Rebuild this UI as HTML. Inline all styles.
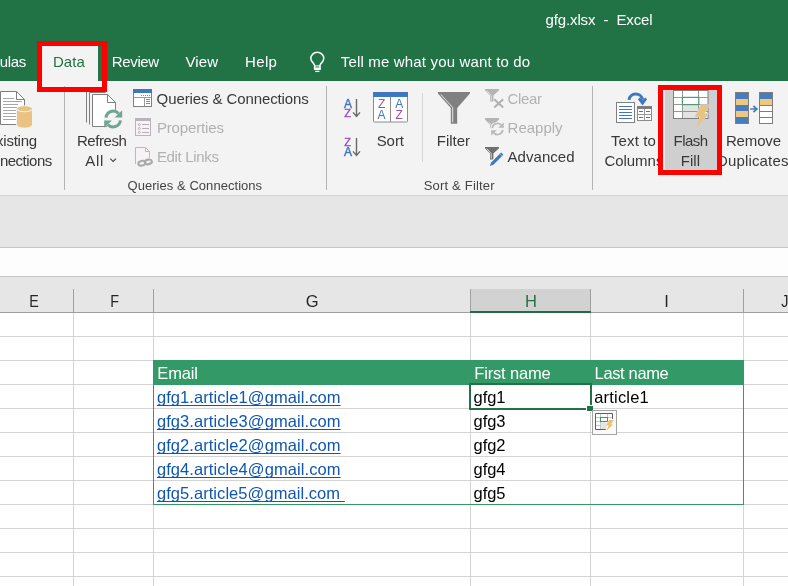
<!DOCTYPE html>
<html lang="en">
<head>
<meta charset="utf-8">
<title>gfg.xlsx - Excel</title>
<style>
html,body{margin:0;padding:0}
body{width:788px;height:586px;overflow:hidden;position:relative;background:#fff;font-family:'Liberation Sans',sans-serif}
.a{position:absolute}
#icons{position:absolute;left:0;top:0;z-index:5}
#txt{position:absolute;left:0;top:0;width:788px;height:586px;z-index:6;will-change:transform}
#txt span{z-index:6}
#icons{will-change:transform}
.red{position:absolute;border:5px solid #fe0000;box-sizing:border-box;z-index:8}
</style>
</head>
<body>
<!-- title bar + tab row -->
<div class="a" style="left:0;top:0;width:788px;height:81px;background:#217346"></div>
<!-- selected tab -->
<div class="a" style="left:40px;top:44px;width:58px;height:38px;background:#f3f3f3"></div>
<!-- ribbon -->
<div class="a" style="left:0;top:81px;width:788px;height:114px;background:#f3f3f3"></div>
<div class="a" style="left:0;top:195px;width:788px;height:1px;background:#d4d4d4"></div>
<div class="a" style="left:0;top:196px;width:788px;height:51px;background:#e6e6e6"></div>
<div class="a" style="left:0;top:247px;width:788px;height:1px;background:#c6c6c6"></div>
<div class="a" style="left:0;top:248px;width:788px;height:28px;background:#fdfdfd"></div>
<div class="a" style="left:0;top:276px;width:788px;height:1px;background:#c6c6c6"></div>
<div class="a" style="left:0;top:277px;width:788px;height:35px;background:#e6e6e6"></div>
<!-- selected column header -->
<div class="a" style="left:471px;top:289px;width:120px;height:22px;background:#d2d2d2"></div>
<div class="a" style="left:470px;top:311px;width:121px;height:2px;background:#1f6e43;z-index:3"></div>
<!-- header bottom line -->
<div class="a" style="left:0;top:312px;width:788px;height:1px;background:#9e9e9e"></div>

<!-- flash fill highlight -->
<div class="a" style="left:665px;top:86px;width:55px;height:88px;background:#cfcfcf;z-index:1"></div>

<svg id="grid" class="a" style="left:0;top:0;z-index:2" width="788" height="586" viewBox="0 0 788 586" shape-rendering="crispEdges">
  <!-- ribbon separators -->
  <g stroke="#b4b4b4" stroke-width="1">
    <line x1="64.5" y1="86" x2="64.5" y2="190"/>
    <line x1="326.5" y1="86" x2="326.5" y2="190"/>
    <line x1="592.5" y1="86" x2="592.5" y2="190"/>
  </g>
  <line x1="422.5" y1="93" x2="422.5" y2="162" stroke="#d6d6d6"/>
  <!-- header dividers -->
  <g stroke="#a0a0a0" stroke-width="1">
    <line x1="73.5" y1="289" x2="73.5" y2="312"/>
    <line x1="153.5" y1="289" x2="153.5" y2="312"/>
    <line x1="470.5" y1="289" x2="470.5" y2="312"/>
    <line x1="590.5" y1="289" x2="590.5" y2="312"/>
    <line x1="743.5" y1="289" x2="743.5" y2="312"/>
  </g>
  <!-- gridlines -->
  <g stroke="#d4d4d4" stroke-width="1">
    <line x1="73.5" y1="313" x2="73.5" y2="586"/>
    <line x1="153.5" y1="313" x2="153.5" y2="586"/>
    <line x1="470.5" y1="313" x2="470.5" y2="586"/>
    <line x1="590.5" y1="313" x2="590.5" y2="586"/>
    <line x1="743.5" y1="313" x2="743.5" y2="586"/>
    <line x1="0" y1="336.5" x2="788" y2="336.5"/>
    <line x1="0" y1="360.5" x2="788" y2="360.5"/>
    <line x1="0" y1="384.5" x2="788" y2="384.5"/>
    <line x1="0" y1="408.5" x2="788" y2="408.5"/>
    <line x1="0" y1="432.5" x2="788" y2="432.5"/>
    <line x1="0" y1="456.5" x2="788" y2="456.5"/>
    <line x1="0" y1="480.5" x2="788" y2="480.5"/>
    <line x1="0" y1="504.5" x2="788" y2="504.5"/>
    <line x1="0" y1="528.5" x2="788" y2="528.5"/>
    <line x1="0" y1="552.5" x2="788" y2="552.5"/>
    <line x1="0" y1="576.5" x2="788" y2="576.5"/>
  </g>
  <!-- table -->
  <rect x="153" y="360" width="591" height="25" fill="#339966"/>
  <rect x="153.5" y="360.5" width="590" height="144" fill="none" stroke="#339966"/>
  <!-- selected cell -->
  <rect x="470" y="384" width="121" height="25" fill="none" stroke="#217346" stroke-width="2"/>
  <rect x="586" y="405" width="7" height="7" fill="#ffffff"/>
  <rect x="587" y="406" width="6" height="5" fill="#217346"/>
  <!-- flash fill options button -->
  <rect x="592.5" y="410.5" width="24" height="24" fill="#fafafa" stroke="#a3a3a3"/>
</svg>

<svg id="icons" width="788" height="586" viewBox="0 0 788 586">
<!-- lightbulb -->
<g fill="none" stroke="#ffffff" stroke-width="1.5" stroke-linejoin="round">
  <path d="M314.6,69.2 V65.4 C314.6,63.2 310.8,62.2 310.8,58.6 A6.5,6.3 0 0 1 323.8,58.6 C323.8,62.2 320,63.2 320,65.4 V69.2 Z"/>
  <line x1="314.6" y1="65.9" x2="320" y2="65.9" stroke-width="1.1"/>
</g>
<rect x="314" y="67.4" width="6.6" height="2.4" fill="#ffffff" fill-opacity="0.92"/>
<line x1="315.3" y1="71.4" x2="319.4" y2="71.4" stroke="#ffffff" stroke-width="1.3"/>

<!-- Existing Connections -->
<g>
  <path d="M0.5,91.5 H16.5 L24.5,99.5 V124.5 H0.5 Z" fill="#ffffff" stroke="#7f7f7f"/>
  <path d="M16.5,91.5 V99.5 H24.5" fill="none" stroke="#7f7f7f"/>
  <g stroke="#a6a6a6" stroke-width="1" shape-rendering="crispEdges">
    <line x1="3" y1="98.5" x2="14" y2="98.5"/>
    <line x1="3" y1="101.5" x2="22" y2="101.5"/>
    <line x1="3" y1="104.5" x2="18" y2="104.5"/>
    <line x1="3" y1="107.5" x2="17" y2="107.5"/>
    <line x1="3" y1="110.5" x2="17" y2="110.5"/>
    <line x1="3" y1="113.5" x2="17" y2="113.5"/>
    <line x1="3" y1="116.5" x2="17" y2="116.5"/>
    <line x1="3" y1="119.5" x2="17" y2="119.5"/>
  </g>
  <path d="M16.5,109 A8,3.3 0 0 1 32.5,109 V124.8 A8,3.3 0 0 1 16.5,124.8 Z" fill="#eac282" stroke="#f3f3f3" stroke-width="1"/>
  <path d="M17.3,109.6 A7.3,2.6 0 0 0 31.7,109.6" fill="none" stroke="#fbf4e6" stroke-width="1.1"/>
</g>

<!-- Refresh All -->
<g>
  <g fill="none" stroke="#7f7f7f" stroke-width="1">
    <line x1="86.5" y1="90" x2="86.5" y2="122.5"/>
    <path d="M105.5,92.5 H89.5 V124.5"/>
  </g>
  <path d="M92.5,94.5 H107.5 L115.5,102.5 V126.5 H92.5 Z" fill="#ffffff" stroke="#7f7f7f"/>
  <path d="M107.5,94.5 V102.5 H115.5" fill="none" stroke="#7f7f7f"/>
  <circle cx="113.2" cy="119" r="9.8" fill="#f3f3f3"/>
  <rect x="103.5" y="109.5" width="8" height="5" fill="#ffffff"/>
  <g fill="none" stroke="#6fa592" stroke-width="3">
    <path d="M106.0,117.6 A7.2,7.2 0 0 1 118.6,113.6"/>
    <path d="M120.4,120.4 A7.2,7.2 0 0 1 107.8,124.4"/>
  </g>
  <path d="M122.2,110.2 V117.6 H114.6 Z" fill="#6fa592"/>
  <path d="M104.2,127.8 V120.4 H111.8 Z" fill="#6fa592"/>
</g>

<!-- Queries & Connections icon -->
<g shape-rendering="crispEdges">
  <rect x="133.5" y="89.5" width="18" height="17" fill="#ffffff" stroke="#7f7f7f"/>
  <rect x="133" y="89" width="19" height="4" fill="#3e78c0"/>
  <line x1="134" y1="97.5" x2="151" y2="97.5" stroke="#9a9a9a"/>
  <line x1="144.5" y1="97" x2="144.5" y2="106" stroke="#9a9a9a"/>
  <g stroke="#8a8a8a">
    <line x1="146" y1="99.5" x2="150" y2="99.5"/>
    <line x1="146" y1="101.5" x2="150" y2="101.5"/>
    <line x1="146" y1="103.5" x2="150" y2="103.5"/>
  </g>
  <g fill="#8a8a8a">
    <rect x="141" y="95" width="1" height="1"/><rect x="143" y="95" width="1" height="1"/><rect x="145" y="95" width="1" height="1"/><rect x="147" y="95" width="1" height="1"/><rect x="149" y="95" width="1" height="1"/>
  </g>
</g>

<!-- Properties icon (disabled) -->
<g>
  <rect x="135.5" y="118.5" width="15" height="17" fill="#f6f2f6" stroke="#b9b4b9" shape-rendering="crispEdges"/>
  <rect x="135" y="118" width="16" height="3" fill="#b9b4b9" shape-rendering="crispEdges"/>
  <g fill="none" stroke="#b4afb4" stroke-width="0.9">
    <circle cx="139.3" cy="124.6" r="1"/>
    <circle cx="139.3" cy="128.5" r="1"/>
    <circle cx="139.3" cy="132.4" r="1"/>
  </g>
  <g stroke="#b4afb4" shape-rendering="crispEdges">
    <line x1="142" y1="124.5" x2="149" y2="124.5"/>
    <line x1="142" y1="128.5" x2="149" y2="128.5"/>
    <line x1="142" y1="132.5" x2="149" y2="132.5"/>
  </g>
</g>

<!-- Edit Links icon (disabled) -->
<g>
  <path d="M135.5,164 V147.5 H145.5 L149.5,151.5 V158.5" fill="#f6f2f6" stroke="#bcb8bc"/>
  <path d="M145.5,147.5 V151.5 H149.5" fill="none" stroke="#bcb8bc"/>
  <g fill="none" stroke="#f3f3f3" stroke-width="3.6">
    <ellipse cx="141.9" cy="163.2" rx="3.6" ry="2.3" transform="rotate(-12 141.9 163.2)"/>
    <ellipse cx="148.3" cy="161.9" rx="3.6" ry="2.3" transform="rotate(-12 148.3 161.9)"/>
  </g>
  <g fill="none" stroke="#aaaaaa" stroke-width="2.1">
    <ellipse cx="141.9" cy="163.2" rx="3.6" ry="2.3" transform="rotate(-12 141.9 163.2)"/>
    <ellipse cx="148.3" cy="161.9" rx="3.6" ry="2.3" transform="rotate(-12 148.3 161.9)"/>
  </g>
</g>

<!-- Sort A-Z / Z-A -->
<g font-family="'Liberation Sans',sans-serif" text-anchor="middle" stroke-width="0.4">
  <text x="348" y="107.8" font-size="12" fill="#3e78c0" stroke="#3e78c0">A</text>
  <text x="347.5" y="117" font-size="11" fill="#9b4fb5" stroke="#9b4fb5">Z</text>
  <text x="347.5" y="145.6" font-size="11" fill="#9b4fb5" stroke="#9b4fb5">Z</text>
  <text x="348" y="155.8" font-size="12" fill="#3e78c0" stroke="#3e78c0">A</text>
</g>
<g fill="none" stroke="#6a6a6a" stroke-width="1.4">
  <path d="M356.5,99 V116.4 M353,112.4 L356.5,116.4 L360,112.4"/>
  <path d="M356.5,138 V155.4 M353,151.4 L356.5,155.4 L360,151.4"/>
</g>

<!-- Sort big icon -->
<g>
  <rect x="373.5" y="92.5" width="34" height="29.5" rx="1" fill="#ffffff" stroke="#8c8c8c"/>
  <rect x="373" y="92" width="35" height="4.6" fill="#3e78c0" shape-rendering="crispEdges"/>
  <line x1="390.5" y1="96.6" x2="390.5" y2="122" stroke="#8c8c8c" shape-rendering="crispEdges"/>
  <g font-family="'Liberation Sans',sans-serif" font-size="12" text-anchor="middle">
    <text x="381.6" y="107.7" fill="#9b4fb5">Z</text>
    <text x="381.6" y="118.5" fill="#3e78c0">A</text>
    <text x="399.2" y="107.7" fill="#3e78c0">A</text>
    <text x="399.2" y="118.5" fill="#9b4fb5">Z</text>
  </g>
</g>

<!-- Filter funnel -->
<g>
  <path d="M437.9,92.1 H469.9 V93.6 L457.2,107.9 V123.8 H450.8 V107.9 L437.9,93.6 Z" fill="#808080"/>
  <path d="M440.8,94.4 L452.7,107.5 V122.4" fill="none" stroke="#f0f0f0" stroke-width="0.9"/>
</g>

<!-- Clear (disabled) -->
<g>
  <path d="M485,89.0 H499 V90.2 L493.4,95.6 V101.6 H490 V95.6 L485,90.2 Z" fill="#b4b4b4"/>
  <path d="M486.9,90.7 L491.2,95.6 V100.7" fill="none" stroke="#f0f0f0" stroke-width="0.8"/>
  <path d="M494.2,99.2 L503.2,107.6 M503.2,99.2 L494.2,107.6" stroke="#b0b0b0" stroke-width="2" fill="none"/>
</g>
<!-- Reapply (disabled) -->
<g>
  <path d="M485,118.1 H499 V119.3 L493.4,124.7 V128.1 H490 V124.7 L485,119.3 Z" fill="#b4b4b4"/>
  <path d="M486.9,119.8 L491.2,124.7 V127.2" fill="none" stroke="#f0f0f0" stroke-width="0.8"/>
  <circle cx="497.5" cy="128.9" r="7.3" fill="#f3f3f3"/>
  <path d="M485,118.1 H499 V119.3 L495.6,122.6 H488 L485,119.3 Z" fill="#b4b4b4"/>
  <g fill="none" stroke="#bcb8bc" stroke-width="1.8">
    <path d="M492.2,128.2 A5.3,5.3 0 0 1 501.2,125"/>
    <path d="M502.8,129.8 A5.3,5.3 0 0 1 493.8,133"/>
  </g>
  <path d="M503.8,122.4 V127.8 H498.2 Z" fill="#bcb8bc"/>
  <path d="M491.2,135.6 V130.2 H496.8 Z" fill="#bcb8bc"/>
</g>
<!-- Advanced -->
<g>
  <path d="M485,147.0 H499 V148.2 L493.4,153.6 V159.6 H490 V153.6 L485,148.2 Z" fill="#707070"/>
  <path d="M486.9,148.7 L491.2,153.6 V158.7" fill="none" stroke="#f3f3f3" stroke-width="0.8"/>
  <path d="M501.1,152.5 L503.4,154.8 L493.4,164.7 L489.8,166 L491.1,162.4 Z" fill="#3e78c0" stroke="#f3f3f3" stroke-width="1.6" paint-order="stroke"/>
  <path d="M499.7,153.9 L502,156.2" stroke="#c9daf0" stroke-width="0.6" fill="none"/>
</g>

<!-- Text to Columns -->
<g>
  <rect x="616.5" y="102.5" width="18" height="20" fill="#ffffff" stroke="#7f7f7f" shape-rendering="crispEdges"/>
  <g stroke="#3e78c0" stroke-width="1" shape-rendering="crispEdges">
    <line x1="619" y1="106.5" x2="632" y2="106.5"/>
    <line x1="619" y1="109.5" x2="632" y2="109.5"/>
    <line x1="619" y1="112.5" x2="632" y2="112.5"/>
    <line x1="619" y1="115.5" x2="632" y2="115.5"/>
    <line x1="619" y1="118.5" x2="632" y2="118.5"/>
  </g>
  <rect x="637.5" y="106.5" width="14" height="14" fill="#ffffff" stroke="#8c8c8c" shape-rendering="crispEdges"/>
  <rect x="637" y="106" width="15" height="3" fill="#7d7d7d" shape-rendering="crispEdges"/>
  <g stroke="#9a9a9a" shape-rendering="crispEdges">
    <line x1="644.5" y1="109" x2="644.5" y2="120"/>
    <line x1="638" y1="114.5" x2="651" y2="114.5"/>
  </g>
  <g stroke="#3e78c0" stroke-width="1" shape-rendering="crispEdges">
    <line x1="639" y1="111.5" x2="643" y2="111.5"/>
    <line x1="646" y1="111.5" x2="650" y2="111.5"/>
    <line x1="639" y1="117.5" x2="643" y2="117.5"/>
    <line x1="646" y1="117.5" x2="650" y2="117.5"/>
  </g>
  <path d="M629,99.9 A6.8,6.6 0 0 1 642.5,99.8" fill="none" stroke="#3e78c0" stroke-width="3"/>
  <path d="M637.9,99.2 L639.8,97.4 L642.5,100.2 L645.2,97.4 L647.1,99.2 L642.5,105.4 Z" fill="#3e78c0"/>
</g>

<!-- Flash Fill icon -->
<g>
  <rect x="673.5" y="90.5" width="34.5" height="28" fill="#ffffff" stroke="#7f7f7f"/>
  <rect x="683" y="105" width="15.5" height="13" fill="#e3e3e3"/>
  <g stroke="#979797" shape-rendering="crispEdges">
    <line x1="682.5" y1="91" x2="682.5" y2="118"/>
    <line x1="698.5" y1="91" x2="698.5" y2="118"/>
    <line x1="674" y1="97.5" x2="708" y2="97.5"/>
    <line x1="674" y1="104.5" x2="708" y2="104.5"/>
    <line x1="674" y1="111.5" x2="708" y2="111.5"/>
  </g>
  <rect x="682.4" y="97.4" width="16.4" height="7.2" fill="#ffffff" stroke="#4d9b7a" stroke-width="1.2"/>
  <path d="M701,104.9 H709.7 L703.6,113.9 H708.1 L696,128.1 L700.4,116.7 H695.5 Z" fill="#eac282" stroke="#cfcfcf" stroke-width="1.3" paint-order="stroke"/>
</g>

<!-- Remove Duplicates -->
<g shape-rendering="crispEdges">
  <rect x="735" y="92" width="14" height="32" fill="#477dbd"/>
  <rect x="735" y="99" width="14" height="6" fill="#efc880"/>
  <rect x="735" y="111" width="14" height="6" fill="#efc880"/>
  <rect x="735.5" y="92.5" width="13" height="31" fill="none" stroke="#7d7d7d"/>
  <rect x="759" y="92" width="14" height="32" fill="#ffffff"/>
  <rect x="759" y="92" width="14" height="7" fill="#477dbd"/>
  <rect x="759" y="99" width="14" height="6" fill="#efc880"/>
  <line x1="759" y1="105.5" x2="773" y2="105.5" stroke="#7d7d7d"/>
  <line x1="759" y1="111.5" x2="773" y2="111.5" stroke="#7d7d7d"/>
  <line x1="759" y1="117.5" x2="773" y2="117.5" stroke="#7d7d7d"/>
  <rect x="759.5" y="92.5" width="13" height="31" fill="none" stroke="#7d7d7d"/>
</g>
<path d="M750.2,109 H756.4 M753.4,105.8 L756.9,109 L753.4,112.2" fill="none" stroke="#477dbd" stroke-width="1.7"/>

<!-- Refresh All dropdown chevron -->
<path d="M110.3,158.6 L113.15,161.4 L116,158.6" fill="none" stroke="#444444" stroke-width="1.1"/>

<!-- Flash fill options icon -->
<g>
  <rect x="596" y="414" width="16.5" height="15.5" fill="#ffffff"/>
  <g stroke="#c9c9c9" shape-rendering="crispEdges">
    <line x1="600.5" y1="414" x2="600.5" y2="429"/>
    <line x1="607.5" y1="414" x2="607.5" y2="420"/>
    <line x1="596" y1="417.5" x2="612" y2="417.5"/>
    <line x1="596" y1="421.5" x2="601" y2="421.5"/>
    <line x1="596" y1="425.5" x2="606" y2="425.5"/>
  </g>
  <rect x="601" y="422.5" width="5.5" height="6.5" fill="#e4e4e4"/>
  <path d="M612.5,418.9 V413.5 H595.5 V429.5 H605.8" fill="none" stroke="#606060" stroke-width="1"/>
  <rect x="600.5" y="417.5" width="7" height="4" fill="#ffffff" stroke="#3f9775" stroke-width="1.1"/>
  <path d="M609,420.1 H613.8 L610.9,424.6 H613.2 L606.2,430.9 L608.6,425.5 H606 Z" fill="#edc373" stroke="#fafafa" stroke-width="0.8" paint-order="stroke"/>
</g>

</svg>

<div id="txt">
<span id="t0" style="position:absolute;left:545.50px;top:9.80px;font-size:15px;line-height:20px;color:#ffffff;letter-spacing:-0.122px;white-space:pre">gfg.xlsx  -  Excel</span>
<span id="t1" style="position:absolute;right:762.00px;top:51.80px;font-size:15px;line-height:20px;color:#ffffff;letter-spacing:-0.300px;white-space:nowrap">Formulas</span>
<span id="t2" style="position:absolute;left:52.90px;top:51.80px;font-size:15px;line-height:20px;color:#217346;letter-spacing:0.128px;white-space:nowrap">Data</span>
<span id="t3" style="position:absolute;left:111.80px;top:51.80px;font-size:15px;line-height:20px;color:#ffffff;letter-spacing:-0.365px;white-space:nowrap">Review</span>
<span id="t4" style="position:absolute;left:185.40px;top:51.80px;font-size:15px;line-height:20px;color:#ffffff;letter-spacing:0.187px;white-space:nowrap">View</span>
<span id="t5" style="position:absolute;left:245.10px;top:51.80px;font-size:15px;line-height:20px;color:#ffffff;letter-spacing:0.335px;white-space:nowrap">Help</span>
<span id="t6" style="position:absolute;left:340.80px;top:51.80px;font-size:15px;line-height:20px;color:#ffffff;letter-spacing:0.166px;white-space:nowrap">Tell me what you want to do</span>
<span id="t7" style="position:absolute;right:751.15px;top:130.80px;font-size:15px;line-height:20px;color:#383838;letter-spacing:-0.250px;white-space:nowrap">Existing</span>
<span id="t8" style="position:absolute;right:736.20px;top:150.80px;font-size:15px;line-height:20px;color:#383838;letter-spacing:-0.500px;white-space:nowrap">Connections</span>
<span id="t9" style="position:absolute;left:76.90px;top:130.80px;font-size:15px;line-height:20px;color:#383838;letter-spacing:-0.433px;white-space:nowrap">Refresh</span>
<span id="t10" style="position:absolute;left:85.30px;top:150.80px;font-size:15px;line-height:20px;color:#383838;letter-spacing:0.743px;white-space:nowrap">All</span>
<span id="t11" style="position:absolute;left:376.70px;top:130.80px;font-size:15px;line-height:20px;color:#383838;letter-spacing:-0.079px;white-space:nowrap">Sort</span>
<span id="t12" style="position:absolute;left:436.80px;top:130.80px;font-size:15px;line-height:20px;color:#383838;letter-spacing:-0.041px;white-space:nowrap">Filter</span>
<span id="t13" style="position:absolute;left:611.00px;top:130.80px;font-size:15px;line-height:20px;color:#383838;letter-spacing:0.102px;white-space:nowrap">Text to</span>
<span id="t14" style="position:absolute;left:604.40px;top:150.80px;font-size:15px;line-height:20px;color:#383838;letter-spacing:-0.030px;white-space:nowrap">Columns</span>
<span id="t15" style="position:absolute;left:673.50px;top:130.80px;font-size:15px;line-height:20px;color:#383838;letter-spacing:-0.537px;white-space:nowrap;z-index:6">Flash</span>
<span id="t16" style="position:absolute;left:680.70px;top:150.80px;font-size:15px;line-height:20px;color:#383838;letter-spacing:0.082px;white-space:nowrap;z-index:6">Fill</span>
<span id="t17" style="position:absolute;left:725.90px;top:130.80px;font-size:15px;line-height:20px;color:#383838;letter-spacing:-0.143px;white-space:nowrap">Remove</span>
<span id="t18" style="position:absolute;left:717.00px;top:150.80px;font-size:15px;line-height:20px;color:#383838;letter-spacing:0.150px;white-space:nowrap">Duplicates</span>
<span id="t19" style="position:absolute;left:156.60px;top:88.80px;font-size:15px;line-height:20px;color:#383838;letter-spacing:-0.102px;white-space:nowrap">Queries &amp; Connections</span>
<span id="t20" style="position:absolute;left:156.90px;top:117.80px;font-size:15px;line-height:20px;color:#b1b1b1;letter-spacing:-0.138px;white-space:nowrap">Properties</span>
<span id="t21" style="position:absolute;left:156.90px;top:146.80px;font-size:15px;line-height:20px;color:#b1b1b1;letter-spacing:-0.325px;white-space:nowrap">Edit Links</span>
<span id="t22" style="position:absolute;left:507.60px;top:88.80px;font-size:15px;line-height:20px;color:#b1b1b1;letter-spacing:-0.332px;white-space:nowrap">Clear</span>
<span id="t23" style="position:absolute;left:507.60px;top:117.80px;font-size:15px;line-height:20px;color:#b1b1b1;letter-spacing:-0.007px;white-space:nowrap">Reapply</span>
<span id="t24" style="position:absolute;left:507.60px;top:146.80px;font-size:15px;line-height:20px;color:#383838;letter-spacing:0.023px;white-space:nowrap">Advanced</span>
<span id="t25" style="position:absolute;left:127.52px;top:175.50px;font-size:13px;line-height:20px;color:#444444;letter-spacing:0.046px;white-space:nowrap">Queries &amp; Connections</span>
<span id="t26" style="position:absolute;left:423.72px;top:175.50px;font-size:13px;line-height:20px;color:#444444;letter-spacing:0.187px;white-space:nowrap">Sort &amp; Filter</span>
<span id="t27" style="position:absolute;left:29.01px;top:291.28px;font-size:16.5px;line-height:20px;color:#262626;letter-spacing:-1.236px;white-space:nowrap;transform:scaleX(0.87);transform-origin:0.99px 0">E</span>
<span id="t28" style="position:absolute;left:109.71px;top:291.28px;font-size:16.5px;line-height:20px;color:#262626;letter-spacing:-1.314px;white-space:nowrap;transform:scaleX(0.87);transform-origin:0.99px 0">F</span>
<span id="t29" style="position:absolute;left:305.71px;top:291.28px;font-size:16.5px;line-height:20px;color:#262626;letter-spacing:-0.064px;white-space:nowrap">G</span>
<span id="t30" style="position:absolute;left:525.01px;top:291.28px;font-size:16.5px;line-height:20px;color:#217346;letter-spacing:0.658px;white-space:nowrap">H</span>
<span id="t31" style="position:absolute;left:664.21px;top:291.28px;font-size:16.5px;line-height:20px;color:#262626;letter-spacing:-0.414px;white-space:nowrap">I</span>
<span id="t32" style="position:absolute;left:780.51px;top:291.28px;font-size:16.5px;line-height:20px;color:#262626;letter-spacing:-1.470px;white-space:nowrap;transform:scaleX(0.87);transform-origin:0.99px 0">J</span>
<span id="t33" style="position:absolute;left:157.31px;top:363.28px;font-size:16.5px;line-height:20px;color:#ffffff;letter-spacing:-0.177px;white-space:nowrap">Email</span>
<span id="t34" style="position:absolute;left:474.31px;top:363.28px;font-size:16.5px;line-height:20px;color:#ffffff;letter-spacing:-0.166px;white-space:nowrap">First name</span>
<span id="t35" style="position:absolute;left:594.61px;top:363.28px;font-size:16.5px;line-height:20px;color:#ffffff;letter-spacing:-0.363px;white-space:nowrap">Last name</span>
<span id="t36" style="position:absolute;left:156.91px;top:387.28px;font-size:16.5px;line-height:20px;color:#0f57b0;letter-spacing:0.081px;white-space:pre;text-decoration:underline;text-decoration-thickness:1px;text-underline-offset:2px;text-decoration-skip-ink:none">gfg1.article1@gmail.com</span>
<span id="t37" style="position:absolute;left:473.61px;top:387.28px;font-size:16.5px;line-height:20px;color:#000000;letter-spacing:-0.086px;white-space:nowrap">gfg1</span>
<span id="t38" style="position:absolute;left:156.91px;top:411.28px;font-size:16.5px;line-height:20px;color:#0f57b0;letter-spacing:0.081px;white-space:pre;text-decoration:underline;text-decoration-thickness:1px;text-underline-offset:2px;text-decoration-skip-ink:none">gfg3.article3@gmail.com</span>
<span id="t39" style="position:absolute;left:473.61px;top:411.28px;font-size:16.5px;line-height:20px;color:#000000;letter-spacing:-0.086px;white-space:nowrap">gfg3</span>
<span id="t40" style="position:absolute;left:156.91px;top:435.28px;font-size:16.5px;line-height:20px;color:#0f57b0;letter-spacing:0.081px;white-space:pre;text-decoration:underline;text-decoration-thickness:1px;text-underline-offset:2px;text-decoration-skip-ink:none">gfg2.article2@gmail.com</span>
<span id="t41" style="position:absolute;left:473.61px;top:435.28px;font-size:16.5px;line-height:20px;color:#000000;letter-spacing:-0.086px;white-space:nowrap">gfg2</span>
<span id="t42" style="position:absolute;left:156.91px;top:459.28px;font-size:16.5px;line-height:20px;color:#0f57b0;letter-spacing:0.081px;white-space:pre;text-decoration:underline;text-decoration-thickness:1px;text-underline-offset:2px;text-decoration-skip-ink:none">gfg4.article4@gmail.com</span>
<span id="t43" style="position:absolute;left:473.61px;top:459.28px;font-size:16.5px;line-height:20px;color:#000000;letter-spacing:-0.086px;white-space:nowrap">gfg4</span>
<span id="t44" style="position:absolute;left:156.91px;top:483.28px;font-size:16.5px;line-height:20px;color:#0f57b0;letter-spacing:0.061px;white-space:pre;text-decoration:underline;text-decoration-thickness:1px;text-underline-offset:2px;text-decoration-skip-ink:none">gfg5.article5@gmail.com </span>
<span id="t45" style="position:absolute;left:473.61px;top:483.28px;font-size:16.5px;line-height:20px;color:#000000;letter-spacing:-0.086px;white-space:nowrap">gfg5</span>
<span id="t46" style="position:absolute;left:594.21px;top:387.28px;font-size:16.5px;line-height:20px;color:#000000;letter-spacing:0.197px;white-space:nowrap">article1</span>
</div>

<!-- red highlight boxes -->
<div class="red" style="left:37px;top:41px;width:70px;height:51px"></div>
<div class="red" style="left:658px;top:85px;width:64px;height:90px"></div>
</body>
</html>
